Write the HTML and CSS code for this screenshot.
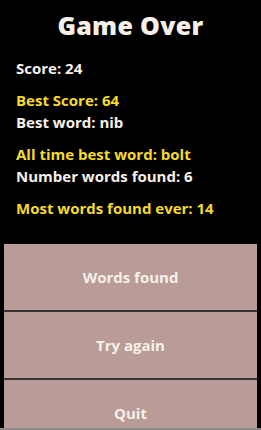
FILE: index.html
```html
<!DOCTYPE html>
<html lang="en">

<head>
    <meta charset="UTF-8">
    <meta name="viewport" content="width=device-width, initial-scale=1.0">
    <title>Game Over</title>
    <link rel="stylesheet" href="styles.css">
</head>

<body>
    <div class="screen">
        <h1 class="title">Game Over</h1>
        <div class="stats">
            <div class="stat">Score: 24</div>
            <div class="stat best gap">Best Score: 64</div>
            <div class="stat">Best word: nib</div>
            <div class="stat best gap">All time best word: bolt</div>
            <div class="stat">Number words found: 6</div>
            <div class="stat best gap">Most words found ever: 14</div>
        </div>
        <div class="menu">
            <button class="menu-button">Words found</button>
            <button class="menu-button">Try again</button>
            <button class="menu-button">Quit</button>
        </div>
    </div>
</body>

</html>
```

FILE: styles.css
```css
body {
    margin: 0;
    background-color: #000;
    font-family: "Open Sans", sans-serif;
    font-weight: 700;
    color: #f6f0e8;
    height: 430px;
    overflow: hidden;
    box-sizing: border-box;
    border-bottom: 2px solid #8a8a8a;
}

.screen {
    display: flex;
    flex-direction: column;
}

.title {
    margin: 10px 0 0;
    text-align: center;
    font-size: 25px;
    line-height: 30px;
    font-weight: 800;
    letter-spacing: 0.3px;
}

.stats {
    padding: 17px 16px 0;
}

.stat {
    font-size: 15px;
    line-height: 22px;
}

.stat.gap {
    margin-top: 10px;
}

.stat.best {
    color: #f6da2a;
}

.menu {
    display: flex;
    flex-direction: column;
    gap: 2px;
    margin: 25px 4px 0;
    background: #3a3434;
}

.menu-button {
    height: 66px;
    border: none;
    background: #b99b98;
    color: #f6f0e8;
    font-family: inherit;
    font-weight: 700;
    font-size: 15px;
    padding: 0;
    flex-shrink: 0;
}
```
